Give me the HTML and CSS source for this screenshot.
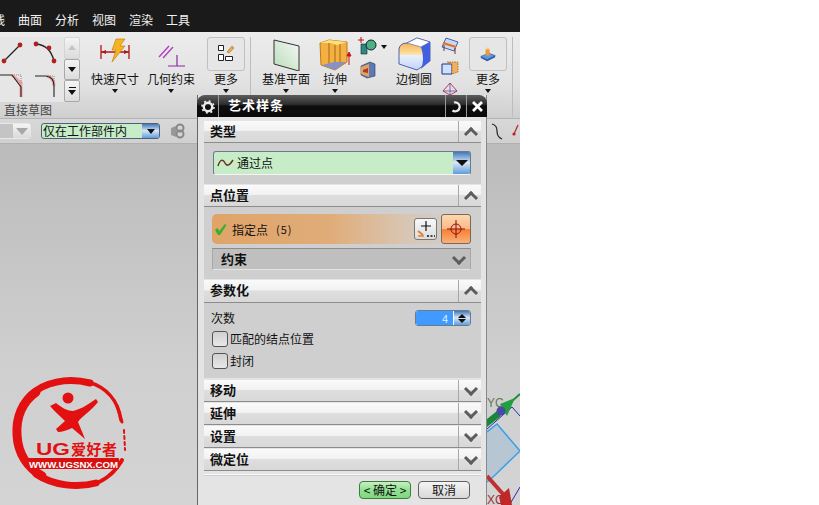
FILE: index.html
```html
<!DOCTYPE html>
<html lang="zh">
<head>
<meta charset="utf-8">
<title>艺术样条</title>
<link rel="stylesheet" href="styles.css">
</head>
<body>
<div class="app">
  <header class="menubar">
    <span class="menu-item menu-cut">线</span>
    <span class="menu-item">曲面</span>
    <span class="menu-item">分析</span>
    <span class="menu-item">视图</span>
    <span class="menu-item">渲染</span>
    <span class="menu-item">工具</span>
  </header>

  <section class="ribbon">
    <div class="group">
      <div class="gallery-row">
        <svg class="gallery" width="64" height="65" viewBox="0 0 64 65">
          <path d="M4 24 20 8" stroke="#222" stroke-width="1.3" fill="none"/>
          <circle cx="4" cy="24" r="2.4" fill="#b02020"/><circle cx="20" cy="8" r="2.4" fill="#b02020"/>
          <path d="M36 7Q50 8 54 24" stroke="#222" stroke-width="1.3" fill="none"/>
          <circle cx="36" cy="7" r="2.4" fill="#b02020"/><circle cx="49" cy="11" r="2.4" fill="#b02020"/><circle cx="54" cy="24" r="2.4" fill="#b02020"/>
          <path d="M12 38 21 46V60" stroke="#f0a0a0" stroke-width="3" fill="none"/>
          <path d="M0 38H12L21 50V60" stroke="#222" stroke-width="1.1" fill="none"/>
          <path d="M14 38H21V46" stroke="#888" stroke-width="1" stroke-dasharray="1 1" fill="none"/>
          <path d="M47 39Q54 41 54 49" stroke="#f0a0a0" stroke-width="3" fill="none"/>
          <path d="M35 39H46Q54 40 54 49V60" stroke="#222" stroke-width="1.1" fill="none"/>
          <path d="M48 39H54V45" stroke="#888" stroke-width="1" stroke-dasharray="1 1" fill="none"/>
        </svg>
        <div class="gallery-scroll">
          <span class="scroll-btn scroll-off"><i class="tri-up"></i></span>
          <span class="scroll-btn"><i class="tri-down"></i></span>
          <span class="scroll-btn scroll-more"><i class="bar"></i><i class="tri-down"></i></span>
        </div>
      </div>
      <div class="group-label">直接草图</div>
    </div>

    <div class="tool tool-dim">
      <svg class="tool-icon" width="34" height="34" viewBox="0 0 34 34">
        <path d="M3 8V22M31 8V22M3 15H31" stroke="#b01818" stroke-width="1.3" fill="none"/>
        <path d="M3 15 8 13V17ZM31 15 26 13V17Z" fill="#b01818"/>
        <path d="M18 2H27L22 9H27L14 25 18 13H14Z" fill="#f3b422" stroke="#d08010" stroke-width=".7"/>
      </svg>
      <span class="tool-label">快速尺寸</span><i class="caret"></i>
    </div>

    <div class="tool tool-geo">
      <svg class="tool-icon" width="34" height="34" viewBox="0 0 34 34">
        <path d="M5 20 15 9M9 21 19 10" stroke="#b040c0" stroke-width="1.4" fill="none"/>
        <path d="M14 29H31M23 18V29" stroke="#8a2aa0" stroke-width="1.2" fill="none"/>
      </svg>
      <span class="tool-label">几何约束</span><i class="caret"></i>
    </div>

    <div class="tool tool-more">
      <span class="more-box">
        <svg width="20" height="20" viewBox="0 0 20 20">
          <path d="M2.500 1.500H7.500V6.500H2.500ZM2.500 10.500H7.500V16.500H2.500ZM9.500 12.500H16.500V16.500H9.500Z" fill="#fff" stroke="#222" stroke-width="1"/>
          <path d="M11 8 16 2 18 4 13 9Z" fill="#e8b040" stroke="#806020" stroke-width=".5"/>
        </svg>
      </span>
      <span class="tool-label">更多</span><i class="caret"></i>
    </div>

    <span class="ribbon-sep sep-a"></span>

    <div class="tool tool-datum">
      <svg class="tool-icon" width="34" height="34" viewBox="0 0 34 34">
        <defs><linearGradient id="pl" x1="0" y1="1" x2="1" y2="0"><stop offset="0" stop-color="#b8dcb8"/><stop offset="1" stop-color="#f6f8f6"/></linearGradient></defs>
        <path d="M5 3 30 9V34L5 27Z" fill="url(#pl)" stroke="#333" stroke-width="1"/>
      </svg>
      <span class="tool-label">基准平面</span><i class="caret"></i>
    </div>

    <div class="tool tool-extrude">
      <svg class="tool-icon" width="34" height="34" viewBox="0 0 34 34">
        <path d="M2 6 11 3 29 5V25L17 33 3 28Z" fill="#f4b040" stroke="#c07818" stroke-width="1"/>
        <path d="M2 6 11 3 29 5 20 8 12 6Z" fill="#fce080"/>
        <path d="M11 6V27M17 8V31M22 7V26" stroke="#a06818" stroke-width="1" fill="none"/>
        <path d="M4 28 16 25 28 25 17 33Z" fill="#8890c8"/>
        <path d="M31 28V17M29 19 31 15 33 19Z" stroke="#d01010" fill="#d01010" stroke-width="1"/>
      </svg>
      <span class="tool-label">拉伸</span><i class="caret"></i>
    </div>

    <div class="tool-col tool-col-a">
      <svg width="20" height="20" viewBox="0 0 20 20">
        <path d="M3 7H9V17H3Z" fill="#2d8a80" stroke="#123" stroke-width=".6"/>
        <circle cx="13" cy="8" r="5" fill="#4cb080" stroke="#123" stroke-width="1"/>
        <path d="M0 3H6M3 0V6" stroke="#c01010" stroke-width="1"/>
      </svg>
      <svg width="18" height="18" viewBox="0 0 18 18">
        <path d="M2 5 11 1 16 3V15L8 17 2 14Z" fill="#5a7ab8" stroke="#334" stroke-width=".6"/>
        <path d="M2 6 10 3V16L2 13Z" fill="#e8a060"/>
        <path d="M4 9 9 7V12L4 11Z" fill="#a04020"/>
      </svg>
    </div>
    <i class="caret caret-side"></i>

    <div class="tool tool-blend">
      <svg class="tool-icon" width="34" height="34" viewBox="0 0 34 34">
        <defs><linearGradient id="bl" x1="0" y1="0" x2="0" y2="1"><stop offset="0" stop-color="#f0a040"/><stop offset=".5" stop-color="#fde0a0"/><stop offset=".55" stop-color="#e8f0fc"/><stop offset="1" stop-color="#c0d4f8"/></linearGradient></defs>
        <path d="M2 12Q3 6 10 6L20 1 33 5V24L20 33 2 27Z" fill="url(#bl)" stroke="#3040a0" stroke-width=".8"/>
        <path d="M10 6 20 1 33 5 24 10Z" fill="#fff" stroke="#3040a0" stroke-width=".5"/>
        <path d="M24 10 33 5V24L24 32Q28 22 24 10Z" fill="#4060e0"/>
      </svg>
      <span class="tool-label">边倒圆</span>
    </div>

    <div class="tool-col tool-col-b">
      <svg width="18" height="18" viewBox="0 0 18 18">
        <path d="M1 10 5 1 17 5 13 14Z" fill="#c8d8f0" stroke="#2040a0" stroke-width=".8"/>
        <path d="M2 6 15 10" stroke="#e07020" stroke-width="2"/><path d="M3 8V14M14 11V17" stroke="#803010" stroke-width="1"/>
      </svg>
      <svg width="18" height="18" viewBox="0 0 18 18">
        <path d="M1 5H11V15H1Z" fill="#cfe0ff" stroke="#1a3090" stroke-width="1"/>
        <path d="M6 3H17V13L11 15V5Z" fill="#f0b060" stroke="#a06018" stroke-width=".8" stroke-dasharray="1.500 1"/>
      </svg>
      <svg width="18" height="18" viewBox="0 0 18 18">
        <path d="M9 2 2 10 9 14 16 10Z" fill="#f0d8e0" stroke="#b03050" stroke-width=".9"/>
        <path d="M9 2V14M2 10 16 10" stroke="#3050a0" stroke-width=".7"/>
      </svg>
    </div>

    <div class="tool tool-more tool-more-b">
      <span class="more-box">
        <svg width="18" height="16" viewBox="0 0 22 20">
          <path d="M2 13 12 9 20 12 10 17Z" fill="#5a9ae0" stroke="#1a3070" stroke-width=".6"/>
          <path d="M2 13V15L10 19 20 14V12L10 17Z" fill="#2a5ab0"/>
          <path d="M8 4H13V12H8Z" fill="#f09838"/><path d="M8 4H13L12 2H9Z" fill="#fcd080"/>
        </svg>
      </span>
      <span class="tool-label">更多</span><i class="caret"></i>
    </div>
    <span class="ribbon-sep sep-b"></span>
  </section>

  <div class="selbar">
    <span class="combo combo-plain"><span class="combo-arrow-plain"><i class="tri-down tri-grey"></i></span></span>
    <span class="combo combo-green">仅在工作部件内<span class="combo-btn"><i class="tri-down"></i></span></span>
    <svg class="sel-icon" width="18" height="18" viewBox="0 0 18 18">
      <path d="M2 6 7 4V15L2 13Z" fill="#999"/><circle cx="11" cy="6" r="3.500" fill="none" stroke="#888" stroke-width="2"/><circle cx="11" cy="12" r="3.500" fill="none" stroke="#888" stroke-width="2"/>
    </svg>
    <span class="sel-right">
      <svg width="30" height="20" viewBox="0 0 30 20">
        <path d="M2 2Q7 3 7 9T12 17" fill="none" stroke="#222" stroke-width="1.200"/>
        <path d="M24 12 28 3" stroke="#c02020" stroke-width="1.200"/><circle cx="24" cy="12" r="1.600" fill="#c02020"/>
      </svg>
    </span>
  </div>

  <main class="canvas">
    <svg class="csys" width="33" height="125" viewBox="0 0 33 125">
      <path d="M0 52 10 44 33 71 6 97 0 102Z" fill="#b6c6d2"/>
      <path d="M0 52 10 44 33 71 6 97 0 102" fill="none" stroke="#3aa0ec" stroke-width="1.500"/>
      <path d="M0 49 25 27 33 36M23 124 33 107" stroke="#2a2ab0" stroke-width="1" fill="none"/>
      <path d="M33 14 14 31" stroke="#208838" stroke-width="2"/>
      <path d="M13 24 28 18 20 36Z" fill="#20a040"/>
      <path d="M0 39 10 31 14 36 0 47Z" fill="#188838"/>
      <circle cx="14" cy="31" r="4.500" fill="#4a48a8"/>
      <path d="M0 96 23 122" stroke="#c03030" stroke-width="4"/>
      <path d="M12 117 22 108 25 125H14Z" fill="#c02828"/>
      <text class="csys-label" x="0" y="27">YC</text>
      <text class="csys-label csys-xc" x="0" y="124">XC</text>
    </svg>

    <svg class="logo" width="140" height="135" viewBox="0 0 140 135">
      <g fill="none" stroke="#e21010" stroke-linecap="round">
        <path d="M36 22C22 32 16 48 17 65C18 84 28 98 42 106" stroke-width="9"/>
        <path d="M32 24C44 13 66 7 90 13" stroke-width="7"/>
        <path d="M88 12C106 17 118 30 121 50" stroke-width="3.500"/>
        <path d="M117 36 122 52" stroke-width="3" stroke-dasharray="3 2"/>
        <path d="M36 104C54 116 78 118 96 113" stroke-width="7"/>
        <path d="M94 114C106 110 116 101 122 90" stroke-width="4" stroke-dasharray="7 1.500"/>
        <path d="M124 60 125 80" stroke-width="2" stroke-dasharray="3 3"/>
      </g>
      <circle cx="68" cy="28" r="5.500" fill="#e21010"/>
      <path d="M50 36 56 33C62 38 68 41 73 41C82 39 90 33 96 29L98 32C90 42 82 46 78 52C81 59 83 64 85 69L72 58C68 60 62 62 58 62L56 59 65 51C60 46 54 41 50 36Z" fill="#e21010"/>
      <text class="logo-ug" x="36" y="85" textLength="34" lengthAdjust="spacingAndGlyphs">UG</text>
      <text class="logo-cn" x="71" y="85" textLength="46">爱好者</text>
      <rect x="28" y="88" width="91" height="11" rx="1" fill="#d81010"/>
      <text class="logo-url" x="29" y="97.500" textLength="89" lengthAdjust="spacingAndGlyphs">WWW.UGSNX.COM</text>
    </svg>
  </main>

  <aside class="dialog">
    <div class="dlg-title">
      <span class="dlg-gear">
        <svg width="14" height="14" viewBox="0 0 14 14"><circle cx="7" cy="7" r="4.200" fill="none" stroke="#eee" stroke-width="2.400"/><circle cx="7" cy="7" r="6" fill="none" stroke="#eee" stroke-width="1.600" stroke-dasharray="2 2.700"/></svg>
      </span>
      <span class="dlg-name">艺术样条</span>
      <span class="dlg-ctl">
        <svg width="13" height="13" viewBox="0 0 13 13"><path d="M4 2.500A4.500 4.500 0 1 1 2.500 10.500" fill="none" stroke="#eee" stroke-width="2.200"/></svg>
      </span>
      <span class="dlg-ctl">
        <svg width="13" height="13" viewBox="0 0 13 13"><path d="M2 2 11 11M11 2 2 11" stroke="#fff" stroke-width="2.800"/></svg>
      </span>
    </div>

    <div class="dlg-body">
      <div class="sec-head"><span class="sec-name">类型</span><span class="sec-chev chev-up"></span></div>
      <div class="sec-body sec-type">
        <div class="type-combo">
          <svg width="18" height="12" viewBox="0 0 18 12"><path d="M1 9C3 2 6 2 8 6S13 8 16 3" fill="none" stroke="#703020" stroke-width="1.500"/></svg>
          <span class="type-text">通过点</span>
          <span class="combo-btn type-btn"><i class="tri-down tri-big"></i></span>
        </div>
      </div>

      <div class="sec-head"><span class="sec-name">点位置</span><span class="sec-chev chev-up"></span></div>
      <div class="sec-body sec-point">
        <div class="point-row">
          <svg class="check" width="13" height="13" viewBox="0 0 13 13"><path d="M1 7 3.500 5 5.500 8 11 1 12.500 2 6 12H4Z" fill="#32b030"/></svg>
          <span class="point-text">指定点</span>
          <span class="point-count">(5)</span>
          <span class="pt-btn">
            <svg width="20" height="20" viewBox="0 0 20 20">
              <path d="M10 2V12M5 7H15" stroke="#111" stroke-width="1.200"/>
              <path d="M2 12 7 16" stroke="#e08030" stroke-width="2"/><path d="M2 17H8" stroke="#e08030" stroke-width="1.500"/>
              <path d="M11 17H13M14.500 17H16.500M18 17H19" stroke="#111" stroke-width="1.500"/>
            </svg>
          </span>
          <span class="pick-btn">
            <svg width="20" height="20" viewBox="0 0 20 20"><circle cx="10" cy="10" r="5" fill="none" stroke="#a01010" stroke-width="1"/><path d="M10 1V19M1 10H19" stroke="#801010" stroke-width="1"/></svg>
          </span>
        </div>
        <div class="sub-head"><span class="sub-name">约束</span><span class="sec-chev-plain chev-down"></span></div>
      </div>

      <div class="sec-head sec-head-tall"><span class="sec-name">参数化</span><span class="sec-chev chev-up"></span></div>
      <div class="sec-body sec-param">
        <div class="param-row">
          <span>次数</span>
          <span class="spinner"><span class="spin-val">4</span><span class="spin-btn"><i class="tri-up tri-dark"></i><i class="tri-down"></i></span></span>
        </div>
        <label class="check-row"><span class="checkbox"></span>匹配的结点位置</label>
        <label class="check-row"><span class="checkbox"></span>封闭</label>
      </div>

      <div class="sec-head sec-closed"><span class="sec-name">移动</span><span class="sec-chev chev-down"></span></div>
      <div class="sec-head sec-closed"><span class="sec-name">延伸</span><span class="sec-chev chev-down"></span></div>
      <div class="sec-head sec-closed"><span class="sec-name">设置</span><span class="sec-chev chev-down"></span></div>
      <div class="sec-head sec-closed"><span class="sec-name">微定位</span><span class="sec-chev chev-down"></span></div>

      <div class="dlg-foot">
        <button class="btn btn-ok">&lt; 确定 &gt;</button>
        <button class="btn">取消</button>
      </div>
    </div>
  </aside>
</div>
</body>
</html>
```
FILE: styles.css
```css
* { box-sizing: border-box; }
html, body { margin: 0; height: 100%; background: #fff; }
body { font-family: "Noto Sans CJK SC", "Liberation Sans", sans-serif; font-size: 12px; color: #111; overflow: hidden; }
i { display: block; }

.app { position: relative; width: 520px; height: 505px; display: flex; flex-direction: column; overflow: hidden; }

/* menu */
.menubar { height: 32px; flex: none; background: #1a1a1a; color: #f2f2f2; display: flex; gap: 13px; padding-top: 12px; font-size: 12px; line-height: 16px; overflow: hidden; }
.menu-item { flex: none; width: 24px; }
.menu-cut { width: 12px; margin-left: -7px; }

/* ribbon */
.ribbon { height: 86px; flex: none; display: flex; align-items: flex-start; background: linear-gradient(#ececec, #e2e2e2 60%, #cfcfcf); padding-top: 5px; overflow: hidden; }
.group { width: 80px; flex: none; display: flex; flex-direction: column; }
.gallery-row { display: flex; height: 65px; }
.gallery { flex: none; background: #e6e6e6; }
.gallery-scroll { width: 16px; flex: none; display: flex; flex-direction: column; }
.scroll-btn { flex: 1; display: flex; flex-direction: column; gap: 2px; align-items: center; justify-content: center; background: linear-gradient(#f4f4f4, #dcdcdc); border: 1px solid #a8a8a8; border-radius: 2px; }
.scroll-off { border-color: #d4d4d4; }
.scroll-off .tri-up { border-bottom-color: #c4c4c4; }
.bar { width: 7px; height: 1px; background: #111; }
.group-label { color: #444; font-size: 12px; line-height: 14px; padding: 1px 0 0 4px; }

.tool { flex: none; display: flex; flex-direction: column; align-items: center; }
.tool-icon { display: block; flex: none; margin-bottom: 1px; }
.tool-label { font-size: 12px; line-height: 14px; white-space: nowrap; }
.caret { width: 0; height: 0; border: 3.500px solid transparent; border-top: 4px solid #111; border-bottom: 0; margin-top: 3px; }
.tool-dim { width: 50px; margin-left: 10px; }
.tool-geo { width: 50px; margin-left: 6px; }
.tool-more { width: 38px; margin-left: 11px; }
.more-box { width: 38px; height: 34px; flex: none; margin-bottom: 1px; display: flex; align-items: center; justify-content: center; background: #e6e6e6; border: 1px solid #c0c0c0; border-radius: 3px; }
.more-box svg { display: block; }
.ribbon-sep { flex: none; width: 1px; height: 80px; background: #bdbdbd; }
.sep-a { margin-left: 5px; }
.tool-datum { width: 52px; margin-left: 9px; }
.tool-extrude { width: 30px; margin-left: 8px; }
.tool-col { flex: none; display: flex; flex-direction: column; align-items: center; }
.tool-col-a { width: 20px; margin-left: 8px; gap: 4px; }
.caret-side { flex: none; margin: 8px 0 0 3px; }
.tool-blend { width: 36px; margin-left: 9px; }
.tool-col-b { width: 18px; margin-left: 9px; gap: 4px; }
.tool-more-b { margin-left: 10px; }
.sep-b { margin-left: 5px; }

/* selection bar */
.selbar { height: 26px; flex: none; display: flex; align-items: center; background: linear-gradient(#d8d8d8, #d0d0d0); border-top: 1px solid #b4b4b4; border-bottom: 1px solid #b0b0b0; }
.combo { display: flex; align-items: center; height: 16px; flex: none; line-height: 14px; }
.combo-plain { width: 31px; background: #c4c4c4; border-radius: 0 4px 4px 0; border: 1px solid #e8e8e8; border-left: 0; justify-content: flex-end; }
.combo-arrow-plain { width: 17px; height: 14px; background: linear-gradient(#f4f4f4, #dadada); display: flex; align-items: center; justify-content: center; }
.combo-green { width: 119px; margin-left: 10px; background: #c6ecc8; border: 1px solid #50607c; border-radius: 3px; font-size: 12px; overflow: hidden; justify-content: space-between; color: #111; padding-left: 1px; white-space: nowrap; }
.combo-btn { width: 17px; height: 100%; flex: none; display: flex; align-items: center; justify-content: center; background: linear-gradient(#3f78b8, #d8e6f6 48%, #5f9cdc); }
.sel-icon { flex: none; margin-left: 9px; }
.sel-right { margin-left: auto; margin-top: 2px; display: block; line-height: 0; }
.tri-down { width: 0; height: 0; border-left: 4px solid transparent; border-right: 4px solid transparent; border-top: 5px solid #111; }
.tri-up { width: 0; height: 0; border-left: 4px solid transparent; border-right: 4px solid transparent; border-bottom: 5px solid #111; }
.tri-big { border-left-width: 6px; border-right-width: 6px; border-top-width: 6px; }
.tri-grey { border-left-width: 6px; border-right-width: 6px; border-top: 7px solid #a8a8a8; }

/* canvas */
.canvas { flex: 1; position: relative; background: linear-gradient(#bbbbbb, #cfcfcf 60%, #d4d4d4); }
.csys { position: absolute; left: 487px; top: 236px; overflow: hidden; }
.csys-label { font-family: "Liberation Sans", sans-serif; font-size: 12px; fill: #607850; }
.csys-xc { fill: #a03030; }
.logo { position: absolute; left: 0; top: 226px; }
.logo-ug { font-family: "Liberation Sans", sans-serif; font-weight: 700; font-size: 17px; fill: #e21010; }
.logo-cn { font-family: "Noto Sans CJK SC", sans-serif; font-weight: 700; font-size: 15px; fill: #e21010; }
.logo-url { font-family: "Liberation Sans", sans-serif; font-weight: 700; font-size: 9.500px; fill: #fff; }

/* dialog */
.dialog { position: absolute; left: 197px; top: 95px; width: 290px; height: 410px; display: flex; flex-direction: column; background: #e4e4e4; border-left: 1px solid #666; border-right: 1px solid #888; }
.dlg-title { height: 22px; flex: none; display: flex; align-items: stretch; margin: 0 -1px; color: #fff; background: linear-gradient(#5c5c5c, #2e2e2e 42%, #0e0e0e 50%, #0a0a0a); border-radius: 8px 8px 0 0; }
.dlg-gear { width: 22px; flex: none; display: flex; align-items: center; justify-content: center; padding-top: 2px; border-right: 1px solid #9a9a9a; }
.dlg-name { flex: 1; padding-left: 9px; font-weight: 700; font-size: 13px; letter-spacing: 1px; line-height: 20px; }
.dlg-ctl { width: 21px; flex: none; display: flex; align-items: center; justify-content: center; border-left: 1px solid #9a9a9a; }
.dlg-body { flex: 1; display: flex; flex-direction: column; padding: 4px 5px 0 6px; }

.sec-head { height: 22px; flex: none; display: flex; align-items: stretch; justify-content: space-between; background: linear-gradient(#fafafa, #f2f2f2 45%, #dedede 50%, #d8d8d8); border-bottom: 1px solid #8c8c8c; }
.sec-head-tall { height: 23px; }
.sec-closed { margin-top: 1px; }
.sec-name { padding-left: 6px; font-weight: 700; font-size: 13px; line-height: 19px; color: #111; }
.sec-chev { width: 23px; flex: none; position: relative; border-left: 1px solid #a8a8a8; }
.sec-chev::after, .sec-chev-plain::after { content: ""; position: absolute; left: 7px; width: 7px; height: 7px; border-left: 3px solid #5c5c5c; border-top: 3px solid #5c5c5c; }
.chev-up::after { top: 8px; transform: rotate(45deg); }
.chev-down::after { top: 4px; transform: rotate(225deg); }

.sec-body { flex: none; background: #cfcfcf; border-bottom: 1px solid #e4e4e4; }
.sec-type { height: 42px; padding: 8px 10px 0 9px; }
.type-combo { height: 24px; display: flex; align-items: center; background: #c6ecc8; border: 1px solid #6a7a90; border-bottom-color: #f4f4f4; border-radius: 3px; padding-left: 3px; overflow: hidden; }
.type-combo svg { flex: none; }
.type-text { flex: 1; padding-left: 2px; font-size: 12px; line-height: 16px; }
.type-btn { align-self: stretch; height: auto; }

.sec-point { height: 73px; padding: 7px 10px 0 8px; }
.point-row { height: 30px; display: flex; align-items: center; padding-left: 2px; border-radius: 5px; background: linear-gradient(90deg, #e0a468, #e0ac78 45%, #d8c6b4 75%, #cfcfcf 95%); position: relative; }
.check { flex: none; }
.point-text { margin-left: 5px; font-size: 12px; }
.point-count { margin-left: 8px; font-size: 11px; letter-spacing: 1px; flex: 1; }
.pt-btn { width: 23px; height: 22px; flex: none; display: flex; align-items: center; justify-content: center; background: linear-gradient(#f8f8f8, #dcdcdc); border: 1px solid #777; border-radius: 3px; }
.pick-btn { width: 30px; height: 30px; flex: none; margin-left: 4px; display: flex; align-items: center; justify-content: center; background: linear-gradient(#fcd8b0, #fbb888 50%, #f88030 52%, #f8b080); border: 1px solid #806850; border-radius: 3px; }
.sub-head { height: 22px; margin-top: 4px; display: flex; align-items: flex-start; justify-content: space-between; padding-left: 8px; background: #bfbfbf; border: 1px solid #a8a8a8; border-top-color: #8c8c8c; border-bottom-color: #e4e4e4; font-weight: 700; font-size: 13px; line-height: 19px; }
.sub-name { display: block; }
.sec-chev-plain { width: 23px; height: 20px; position: relative; }

.sec-param { height: 76px; padding: 7px 10px 0 7px; }
.param-row { height: 16px; display: flex; justify-content: space-between; align-items: center; font-size: 12px; line-height: 16px; }
.spinner { width: 56px; height: 16px; flex: none; display: flex; border: 1px solid #6a7a90; border-radius: 3px; overflow: hidden; background: #fff; }
.spin-val { flex: 1; background: #3f9bff; color: #dfeeff; text-align: right; padding-right: 5px; font-size: 11px; line-height: 14px; margin-right: 1px; }
.spin-btn { width: 16px; flex: none; display: flex; flex-direction: column; align-items: center; justify-content: center; gap: 1px; background: linear-gradient(#3f78b8, #d8e6f6 48%, #5f9cdc); }
.spin-btn .tri-up { border-bottom-width: 4px; }
.spin-btn .tri-down { border-top-width: 4px; }
.check-row { height: 22px; display: flex; align-items: center; gap: 2px; padding-left: 1px; font-size: 12px; line-height: 16px; margin-top: 0; }
.param-row + .check-row { margin-top: 2px; }
.checkbox { width: 16px; height: 16px; flex: none; background: linear-gradient(#d0d0d0, #e8e8e8); border: 1px solid #555; border-radius: 3px; }

.dlg-foot { margin-top: 3px; padding: 6px 11px 0 0; border-top: 1px solid #fafafa; box-shadow: inset 0 1px 0 #cfcfcf; display: flex; justify-content: flex-end; gap: 7px; }
.btn { width: 52px; height: 18px; padding: 0; font: 12px/14px "Noto Sans CJK SC", sans-serif; color: #111; background: linear-gradient(#f4f4f4, #d8d8d8); border: 1px solid #606060; border-radius: 4px; }
.btn-ok { background: linear-gradient(#c8f0c0, #90e090 50%, #80d880); border-color: #3c7c3c; }
```
